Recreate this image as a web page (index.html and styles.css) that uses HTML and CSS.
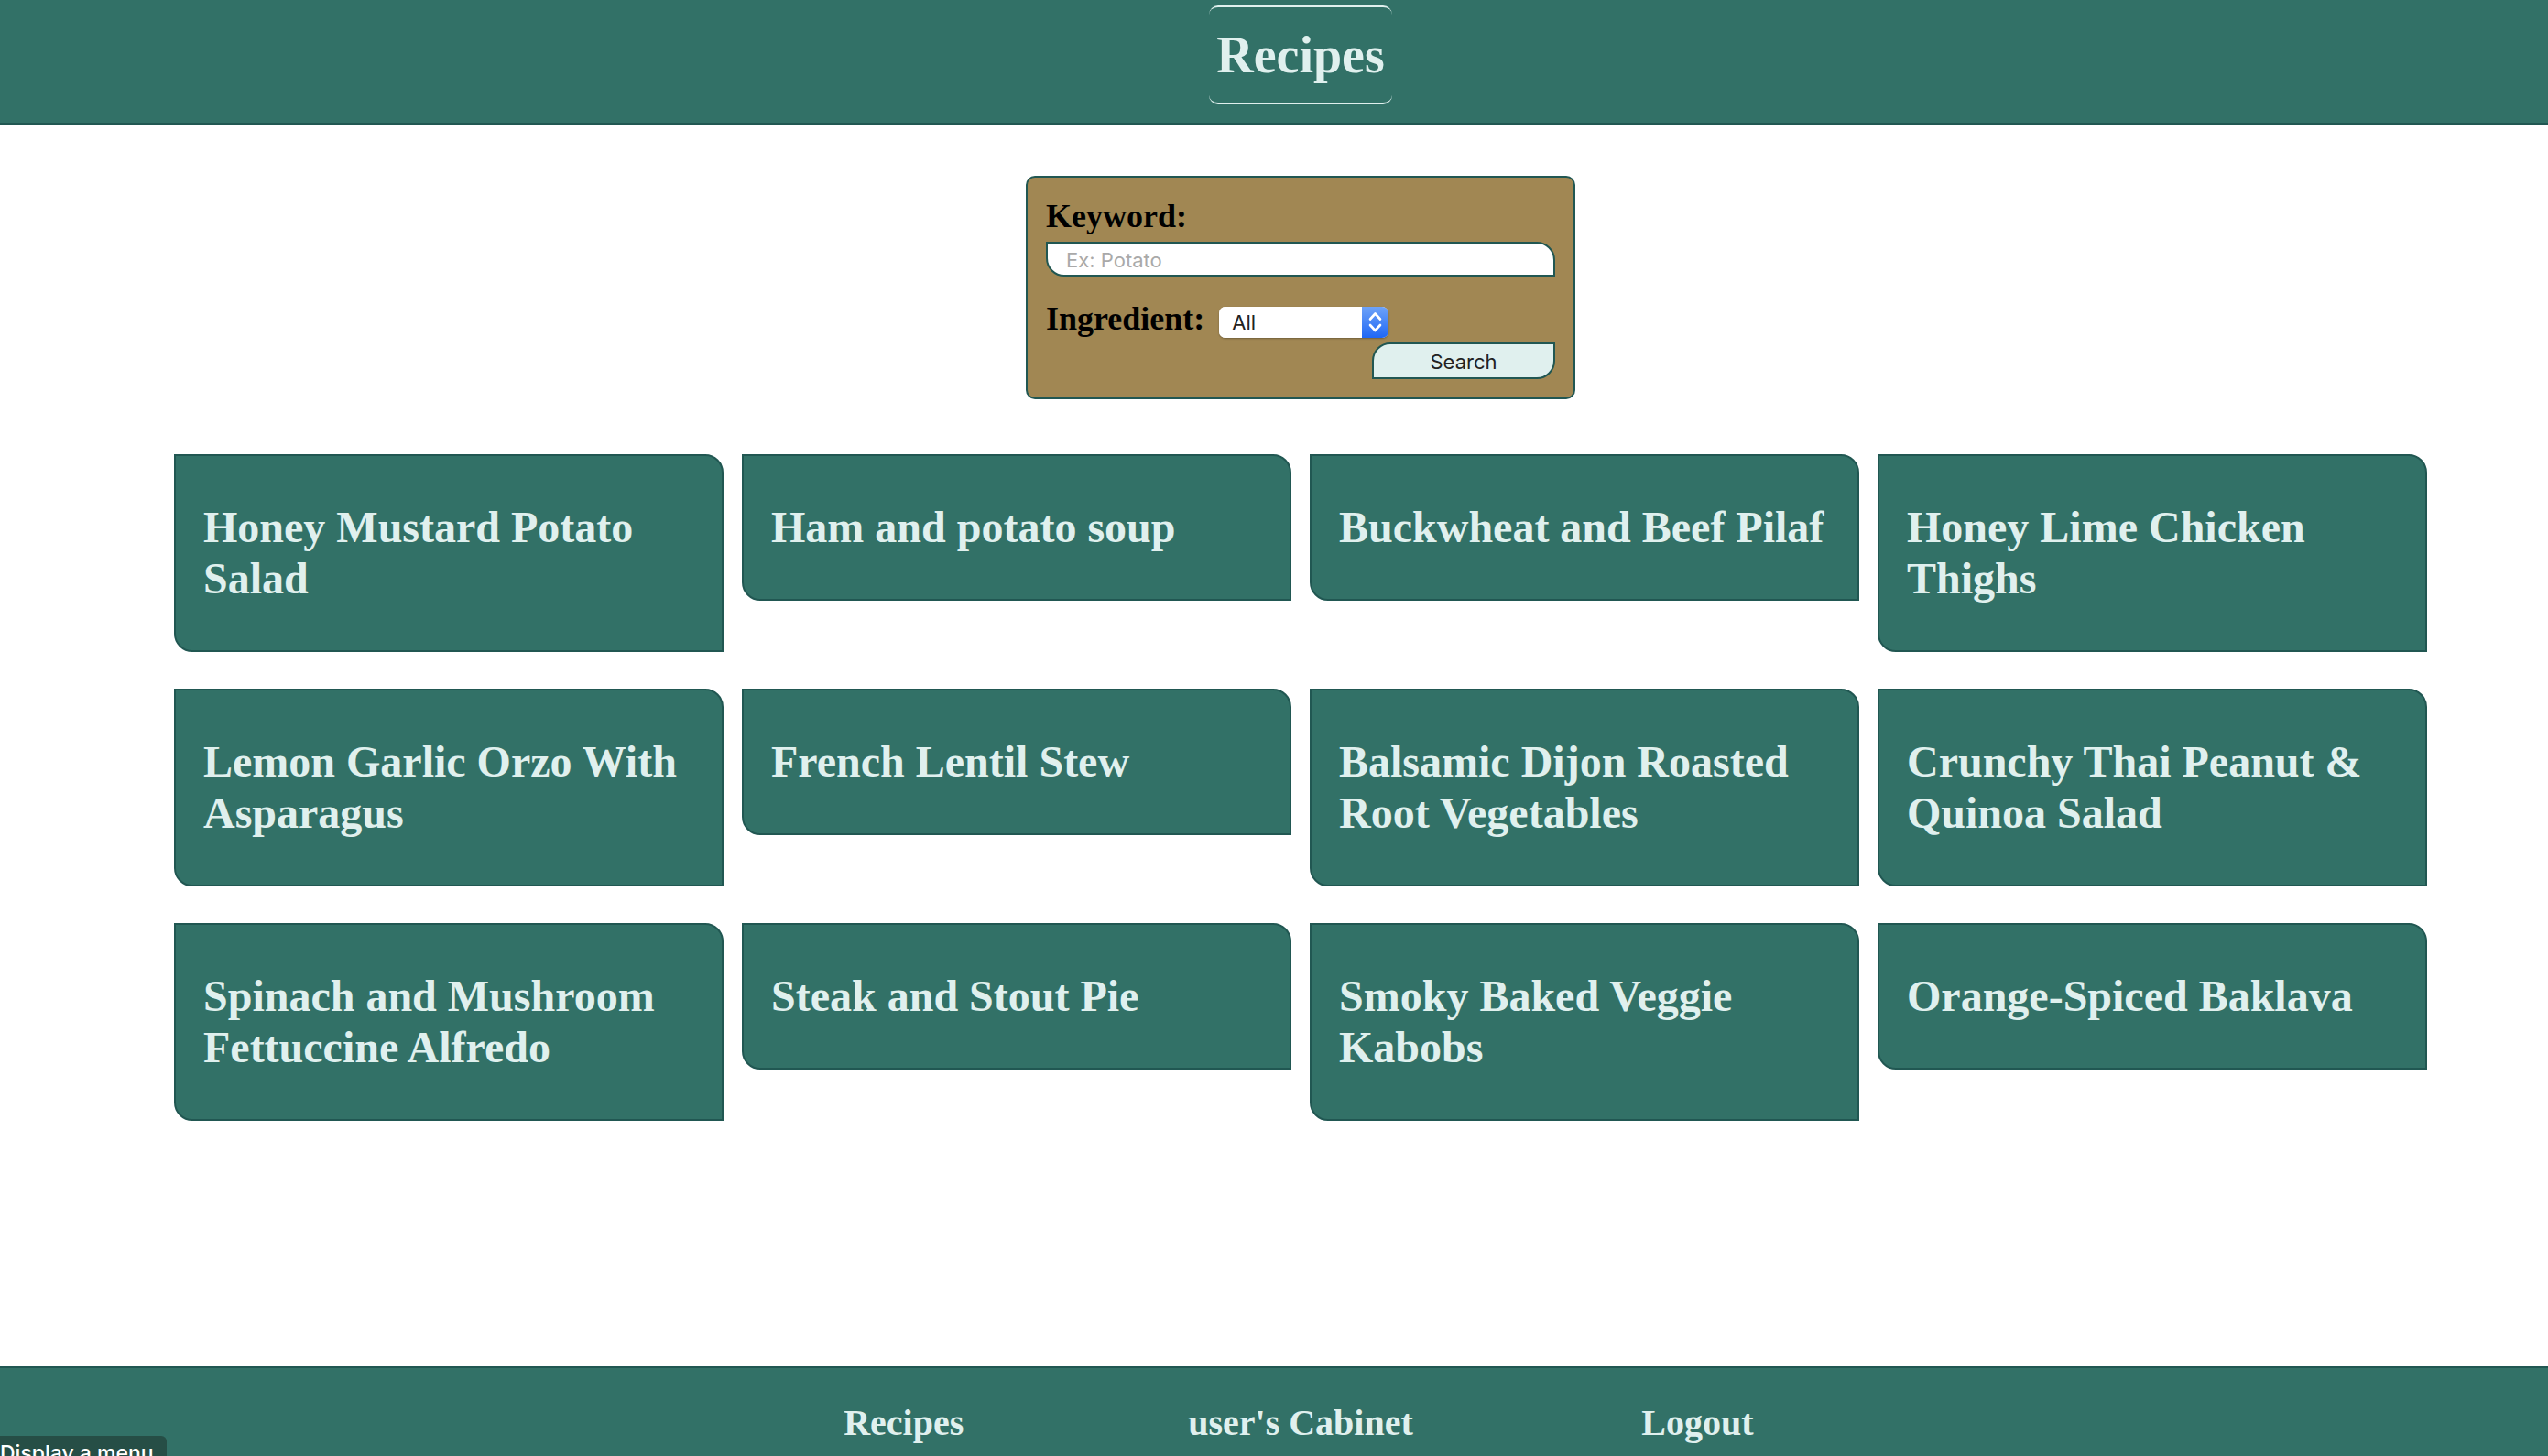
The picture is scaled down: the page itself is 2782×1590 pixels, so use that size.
FILE: index.html
```html
<!DOCTYPE html>
<html lang="en">
<head>
<meta charset="utf-8">
<title>Recipes</title>
<link rel="stylesheet" href="styles.css">
</head>
<body>
<header class="site-header"><h1 class="site-title">Recipes</h1></header>
<main class="content">
  <form class="search">
    <label class="search-label" for="keyword">Keyword:</label>
    <input class="search-input" id="keyword" type="text" placeholder="Ex: Potato">
    <div class="search-row">
      <label class="search-label" for="ingredient">Ingredient:</label>
      <span class="select-wrap">
        <select class="search-select" id="ingredient"><option>All</option></select>
        <svg class="select-arrows" viewBox="0 0 29 34" aria-hidden="true"><path d="M9 13.500l5.500-6 5.500 6M9 20l5.500 6 5.500-6" fill="none" stroke="#fff" stroke-width="2.600" stroke-linecap="round" stroke-linejoin="round"/></svg>
      </span>
    </div>
    <button class="search-button" type="submit">Search</button>
  </form>
  <section class="cards">
    <article class="card"><h2 class="card-title">Honey Mustard Potato Salad</h2></article>
    <article class="card"><h2 class="card-title">Ham and potato soup</h2></article>
    <article class="card"><h2 class="card-title">Buckwheat and Beef Pilaf</h2></article>
    <article class="card"><h2 class="card-title">Honey Lime Chicken Thighs</h2></article>
    <article class="card"><h2 class="card-title">Lemon Garlic Orzo With Asparagus</h2></article>
    <article class="card"><h2 class="card-title">French Lentil Stew</h2></article>
    <article class="card"><h2 class="card-title">Balsamic Dijon Roasted Root Vegetables</h2></article>
    <article class="card"><h2 class="card-title">Crunchy Thai Peanut &amp; Quinoa Salad</h2></article>
    <article class="card"><h2 class="card-title">Spinach and Mushroom Fettuccine Alfredo</h2></article>
    <article class="card"><h2 class="card-title">Steak and Stout Pie</h2></article>
    <article class="card"><h2 class="card-title">Smoky Baked Veggie Kabobs</h2></article>
    <article class="card"><h2 class="card-title">Orange-Spiced Baklava</h2></article>
  </section>
</main>
<footer class="site-footer">
  <nav class="footer-nav">
    <a class="footer-link" href="#recipes">Recipes</a>
    <a class="footer-link" href="#cabinet">user's Cabinet</a>
    <a class="footer-link" href="#logout">Logout</a>
  </nav>
</footer>
<div class="status">Display a menu</div>
</body>
</html>
```
FILE: styles.css
```css
:root {
  --green: #327167;
  --dark: #215752;
  --pale: #e0f0ee;
  --tan: #a18753;
}
* { box-sizing: border-box; }
body {
  margin: 0;
  min-height: 100vh;
  display: flex;
  flex-direction: column;
  position: relative;
  overflow: hidden;
  background: #fff;
  font-family: "Liberation Serif", "Times New Roman", serif;
}
.site-header, .content, .site-footer { padding-left: 58px; }
.site-header {
  display: flex;
  justify-content: center;
  padding-top: 6px;
  padding-bottom: 20px;
  background: var(--green);
  border-bottom: 2px solid var(--dark);
}
.site-title {
  margin: 0;
  padding: 20px 8px;
  font-size: 56px;
  line-height: 64px;
  color: var(--pale);
  border: solid var(--pale);
  border-width: 2px 0;
  border-radius: 10px;
}
.content {
  flex: 1;
  display: flex;
  flex-direction: column;
  align-items: center;
  gap: 60px;
  padding-top: 56px;
  padding-bottom: 40px;
}
.search {
  width: 600px;
  max-width: 100%;
  padding: 20px;
  display: flex;
  flex-direction: column;
  background: var(--tan);
  border: 2px solid var(--dark);
  border-radius: 10px;
}
.search-label {
  font-size: 36px;
  line-height: 44px;
  font-weight: bold;
  color: #000;
}
.search-input, .search-select, .search-button {
  font-family: Inter, sans-serif;
  font-size: 22px;
  color: #222;
}
.search-input {
  height: 38px;
  margin-top: 6px;
  padding: 2px 20px 0;
  background: #fff;
  border: 2px solid var(--dark);
  border-radius: 0 20px;
}
.search-input::placeholder { color: #a9a9a9; }
.search-row {
  display: flex;
  align-items: center;
  gap: 16px;
  margin-top: 24px;
}
.select-wrap {
  display: flex;
  height: 34px;
  margin-top: 8px;
  border-radius: 7px;
  overflow: hidden;
  background: #fff;
  box-shadow: 0 1px 2px rgba(0, 0, 0, .3);
}
.search-select {
  width: 156px;
  padding: 0 14px;
  appearance: none;
  background: #fff;
  border: 0;
}
.select-arrows {
  width: 29px;
  height: 34px;
  background: linear-gradient(#6ea3f8, #1f67f5);
}
.search-button {
  align-self: flex-end;
  width: 200px;
  height: 40px;
  margin-top: 4px;
  padding: 2px 0 0;
  background: var(--pale);
  border: 2px solid var(--dark);
  border-radius: 20px 0;
}
.cards {
  width: 2460px;
  max-width: 94%;
  display: grid;
  grid-template-columns: repeat(4, 1fr);
  align-items: start;
  gap: 40px 20px;
}
.card {
  padding: 50px 30px;
  background: var(--green);
  border: 2px solid var(--dark);
  border-radius: 0 20px;
}
.card-title {
  margin: 0;
  font-size: 48px;
  line-height: 56px;
  color: var(--pale);
}
.site-footer {
  display: flex;
  justify-content: center;
  padding-top: 37px;
  padding-bottom: 13px;
  background: var(--green);
  border-top: 2px solid var(--dark);
}
.footer-nav {
  width: 1300px;
  max-width: 100%;
  display: grid;
  grid-template-columns: repeat(3, 1fr);
}
.footer-link {
  text-align: center;
  font-size: 40px;
  line-height: 46px;
  font-weight: bold;
  color: var(--pale);
  text-decoration: none;
}
.status {
  position: absolute;
  left: 0;
  bottom: -16px;
  padding-right: 14px;
  font-family: Inter, sans-serif;
  font-size: 23px;
  line-height: 38px;
  font-weight: 500;
  color: #fff;
  background: #264e46;
  border-radius: 0 6px 0 0;
}
```
